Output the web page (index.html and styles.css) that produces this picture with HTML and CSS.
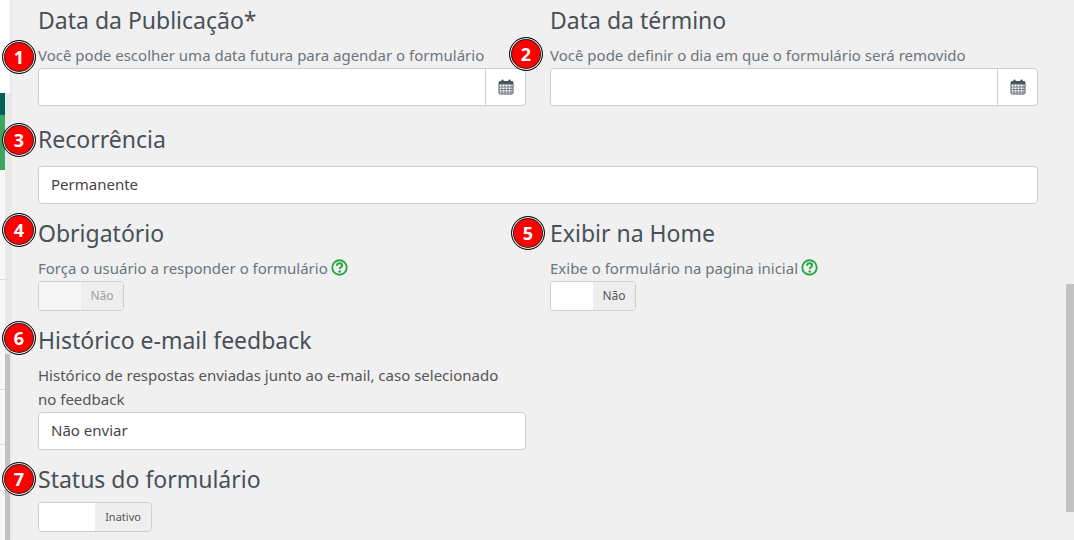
FILE: index.html
```html
<!DOCTYPE html>
<html lang="en">
<head>
  <meta charset="UTF-8">
  <title>Formulário</title>
  <link rel="stylesheet" href="styles.css">
</head>
<body>
  <div class="layout">
    <div class="sidebar">
      <div class="menu-strip">
        <div class="menu-blank"></div>
        <div class="menu-teal"></div>
        <div class="menu-green"></div>
        <div class="menu-item menu-a"></div>
        <div class="menu-item menu-b"></div>
        <div class="menu-item menu-c"></div>
        <div class="menu-item menu-d"></div>
      </div>
      <div class="sidebar-track"><div class="sidebar-thumb"></div></div>
    </div>

    <div class="content">
      <div class="form-row row-dates">
        <div class="field">
          <h3 class="field-title">Data da Publicação*<span class="badge badge-1">1</span></h3>
          <p class="field-help">Você pode escolher uma data futura para agendar o formulário</p>
          <div class="date-input">
            <div class="date-text"></div>
            <div class="date-btn">
              <svg width="16" height="16" viewBox="0 0 16 16"><rect x="1" y="2.5" width="14" height="12.5" rx="1.2" fill="#fff" stroke="#4a5560"/><rect x="1" y="2.5" width="14" height="3" fill="#4a5560"/><rect x="3.3" y="0.6" width="2.4" height="3.7" rx="1.1" fill="#4a5560"/><rect x="10.3" y="0.6" width="2.4" height="3.7" rx="1.1" fill="#4a5560"/><path d="M1 8h14M1 10.5h14M1 13h14M4 5.5v9.5M7 5.5v9.5M10 5.5v9.5M13 5.5v9.5" stroke="#5d6873" stroke-width="0.8" fill="none"/></svg>
            </div>
          </div>
        </div>
        <div class="field">
          <h3 class="field-title">Data da término<span class="badge badge-2">2</span></h3>
          <p class="field-help">Você pode definir o dia em que o formulário será removido</p>
          <div class="date-input">
            <div class="date-text"></div>
            <div class="date-btn">
              <svg width="16" height="16" viewBox="0 0 16 16"><rect x="1" y="2.5" width="14" height="12.5" rx="1.2" fill="#fff" stroke="#4a5560"/><rect x="1" y="2.5" width="14" height="3" fill="#4a5560"/><rect x="3.3" y="0.6" width="2.4" height="3.7" rx="1.1" fill="#4a5560"/><rect x="10.3" y="0.6" width="2.4" height="3.7" rx="1.1" fill="#4a5560"/><path d="M1 8h14M1 10.5h14M1 13h14M4 5.5v9.5M7 5.5v9.5M10 5.5v9.5M13 5.5v9.5" stroke="#5d6873" stroke-width="0.8" fill="none"/></svg>
            </div>
          </div>
        </div>
      </div>

      <div class="row-recurrence">
        <h3 class="field-title">Recorrência<span class="badge badge-3">3</span></h3>
        <div class="text-box">Permanente</div>
      </div>

      <div class="form-row row-toggles">
        <div class="field">
          <h3 class="field-title">Obrigatório<span class="badge badge-4">4</span></h3>
          <p class="field-help">Força o usuário a responder o formulário
            <svg class="help-icon" width="17" height="17" viewBox="0 0 17 17"><circle cx="8.5" cy="8.5" r="7.2" fill="none" stroke="#28a745" stroke-width="1.9"/><path d="M6 6.7c0-1.5 1.1-2.4 2.6-2.4s2.5.9 2.5 2.1c0 1.9-2.4 1.8-2.4 3.5" fill="none" stroke="#28a745" stroke-width="2"/><circle cx="8.7" cy="12.5" r="1.2" fill="#28a745"/></svg>
          </p>
          <div class="toggle toggle-off">
            <div class="toggle-blank"></div>
            <div class="toggle-label">Não</div>
          </div>
        </div>
        <div class="field">
          <h3 class="field-title">Exibir na Home<span class="badge badge-5">5</span></h3>
          <p class="field-help">Exibe o formulário na pagina inicial
            <svg class="help-icon" width="17" height="17" viewBox="0 0 17 17"><circle cx="8.5" cy="8.5" r="7.2" fill="none" stroke="#28a745" stroke-width="1.9"/><path d="M6 6.7c0-1.5 1.1-2.4 2.6-2.4s2.5.9 2.5 2.1c0 1.9-2.4 1.8-2.4 3.5" fill="none" stroke="#28a745" stroke-width="2"/><circle cx="8.7" cy="12.5" r="1.2" fill="#28a745"/></svg>
          </p>
          <div class="toggle">
            <div class="toggle-blank"></div>
            <div class="toggle-label">Não</div>
          </div>
        </div>
      </div>

      <div class="form-row row-history">
        <div class="field">
          <h3 class="field-title">Histórico e-mail feedback<span class="badge badge-6">6</span></h3>
          <p class="field-note">Histórico de respostas enviadas junto ao e-mail, caso selecionado no feedback</p>
          <div class="text-box">Não enviar</div>
        </div>
      </div>

      <div class="form-row row-status">
        <div class="field">
          <h3 class="field-title">Status do formulário<span class="badge badge-7">7</span></h3>
          <div class="toggle toggle-wide">
            <div class="toggle-blank"></div>
            <div class="toggle-label">Inativo</div>
          </div>
        </div>
      </div>
    </div>

    <div class="page-thumb"></div>
  </div>
</body>
</html>
```

FILE: styles.css
```css
html, body {
  margin: 0;
  padding: 0;
  height: 540px;
  overflow: hidden;
}
body {
  font-family: "Noto Sans", "Open Sans", sans-serif;
  background-color: #f0f0f0;
  color: #495057;
}
.layout {
  display: flex;
  height: 540px;
  overflow: hidden;
  position: relative;
}

/* sidebar edge */
.sidebar {
  display: flex;
  width: 10px;
  flex-shrink: 0;
  height: 540px;
  background: #fff;
  box-shadow: 1px 0 2px rgba(0,0,0,0.06);
}
.menu-strip {
  width: 5px;
  background: #f7f7f7;
}
.menu-blank { height: 93px; background: #fff; }
.menu-teal { height: 22px; background: #006059; }
.menu-green { height: 55px; background: #3fa660; }
.menu-item { border-bottom: 1px solid #dcdcdc; box-sizing: border-box; }
.menu-a { height: 110px; }
.menu-b { height: 110px; }
.menu-c { height: 55px; }
.menu-d { height: 46px; }
.sidebar-track {
  width: 5px;
  height: 447px;
  margin-top: 93px;
  background: #e9e9e9;
}
.sidebar-thumb {
  height: 186px;
  margin-top: 261px;
  background: #c2c2c2;
}

.content {
  width: 1000px;
  padding: 0 0 0 28px;
}
.form-row {
  display: grid;
  grid-template-columns: 488px 488px;
  gap: 24px;
}
.field-title {
  position: relative;
  margin: 0;
  font-size: 23px;
  font-weight: 400;
  line-height: 30px;
  color: #495057;
}
.field-help {
  margin: 0;
  font-size: 15px;
  line-height: 20px;
  color: #6c757d;
}
.field-note {
  margin: 0;
  padding-right: 20px;
  font-size: 15px;
  line-height: 24px;
  color: #555;
}
.row-dates { margin-top: 5px; }
.row-recurrence { margin-top: 18px; }
.row-toggles { margin-top: 14px; }
.row-history { margin-top: 14px; }
.row-status { margin-top: 14px; }
.row-dates .field-help { margin-top: 10px; margin-bottom: 3px; }
.row-toggles .field-help { margin-top: 10px; margin-bottom: 3px; }
.row-history .field-note { margin-top: 8px; margin-bottom: 1px; }
.row-status .toggle { margin-top: 8px; }

.date-input {
  display: flex;
  height: 38px;
  box-sizing: border-box;
  background: #fff;
  border: 1px solid #cfcfcf;
  border-radius: 4px;
}
.date-text { flex: 1; }
.date-btn {
  width: 40px;
  box-sizing: border-box;
  display: flex;
  align-items: center;
  justify-content: center;
  border-left: 1px solid #cfcfcf;
}
.text-box {
  height: 38px;
  box-sizing: border-box;
  padding: 0 12px;
  background: #fff;
  border: 1px solid #cfcfcf;
  border-radius: 4px;
  font-size: 15px;
  line-height: 34px;
  color: #444;
}
.row-recurrence .text-box { margin-top: 12px; }
.help-icon { vertical-align: -2px; margin-left: -1px; }

.toggle {
  display: flex;
  width: 86px;
  height: 30px;
  box-sizing: border-box;
  border: 1px solid #cfcfcf;
  border-radius: 4px;
  overflow: hidden;
}
.toggle-blank {
  flex: 1;
  background: #fff;
}
.toggle-label {
  width: 42px;
  font-size: 12px;
  line-height: 28px;
  text-align: center;
  background: #eee;
  color: #555;
}
.toggle-wide { width: 114px; }
.toggle-wide .toggle-label { width: 56px; font-size: 11px; }
.toggle-off .toggle-blank { background: #f6f6f6; }
.toggle-off .toggle-label { color: #a0a0a0; }

/* numbered markers sit over the form */
.badge {
  position: absolute;
  left: -36px;
  width: 34px;
  height: 34px;
  box-sizing: border-box;
  border: 1px solid #111;
  box-shadow: inset 0 0 0 1px #eee, inset 0 0 0 2px #222;
  border-radius: 50%;
  background: #f00;
  color: #fff;
  font-size: 18px;
  font-weight: 700;
  line-height: 32px;
  text-align: center;
}
.badge-1 { top: 35px; }
.badge-2 { top: 32px; left: -41px; }
.badge-3 { top: -1px; }
.badge-4 { top: -5px; }
.badge-5 { top: -2px; left: -39px; }
.badge-6 { top: -4px; }
.badge-7 { top: -2px; }
.page-thumb {
  position: absolute;
  right: 0;
  top: 284px;
  width: 8px;
  height: 228px;
  background: #c2c2c2;
}
```
